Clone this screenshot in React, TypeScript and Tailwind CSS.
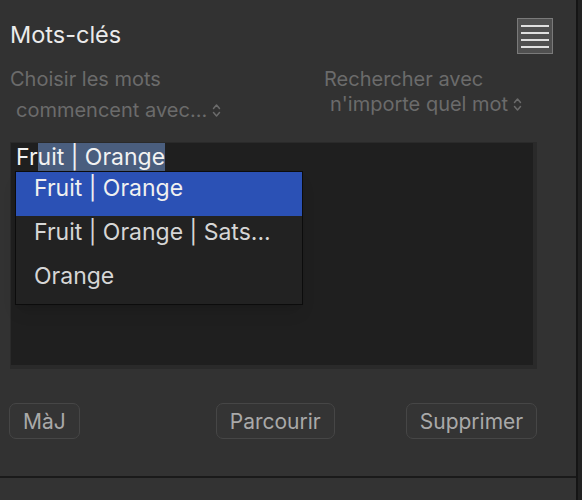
import React from "react";

const FONT = { fontFamily: "Inter, 'Noto Sans', 'Liberation Sans', sans-serif" };

function UpDown() {
  return (
    <svg width="9" height="15" viewBox="0 0 9 15" className="inline-block ml-[5px]">
      <path d="M1.5 5.5 L4.5 2 L7.5 5.5 M1.5 9.5 L4.5 13 L7.5 9.5" fill="none" stroke="#6b6b6b" strokeWidth="1.5" strokeLinecap="round" strokeLinejoin="round" />
    </svg>
  );
}

function Hamburger() {
  return (
    <button className="w-[36px] h-[36px] bg-[#505050] border border-[#7a7a7a] flex flex-col justify-center gap-[5px] px-[3px]">
      {[0, 1, 2, 3].map((i) => (
        <span key={i} className="block h-[2px] w-full bg-[#e0e0e0]" />
      ))}
    </button>
  );
}

function Btn({ label, className }: { label: string; className?: string }) {
  return (
    <button className={`h-[36px] px-[13px] rounded-[7px] border border-[#464646] bg-[#343434] text-[#a9a9a9] text-[21px] leading-none ${className ?? ""}`}>
      {label}
    </button>
  );
}

export default function App() {
  const items = ["Fruit | Orange", "Fruit | Orange | Sats...", "Orange"];
  return (
    <div className="w-[582px] h-[500px] flex bg-[#323232] overflow-hidden" style={FONT}>
      <div className="w-[576px] flex flex-col">
        <div className="h-[476px] relative">
          <div className="flex justify-between items-start pt-[18px] pr-[23px]">
            <h1 className="pl-[10px] pt-[2px] text-[23.5px] leading-[30px] text-[#ebebeb] font-normal">Mots-clés</h1>
            <Hamburger />
          </div>
          <div className="flex mt-[13px] text-[20px] text-[#6b6b6b]">
            <div className="w-[324px] pl-[10px]">
              <div className="leading-[24px]">Choisir les mots</div>
              <div className="leading-[24px] pl-[6px] mt-[7px] flex items-center">commencent avec...<UpDown /></div>
            </div>
            <div>
              <div className="leading-[24px]">Rechercher avec</div>
              <div className="leading-[24px] pl-[6px] mt-[1px] flex items-center">n'importe quel mot<UpDown /></div>
            </div>
          </div>
          <div className="ml-[10px] mt-[20px] w-[527px] h-[227px] bg-[#1f1f1f] border-t border-l border-r-4 border-b-4 border-[#2a2a2a] relative">
            <div className="pl-[5px] text-[23px] leading-[28px] text-[#f2f2f2]">
              Fr<span className="bg-[#4a5e7e]">uit | Orange</span>
            </div>
            <div className="absolute left-[4px] top-[28px] w-[288px] bg-[#222222] border border-[#0c0c0c] shadow-lg">
              {items.map((t, i) => (
                <div
                  key={t}
                  className={`h-[44px] pl-[18px] pb-[11px] flex items-center text-[23px] ${i === 0 ? "bg-[#2b51b5] text-[#f0f0f0]" : "text-[#d6d6d6]"}`}
                >
                  {t}
                </div>
              ))}
            </div>
          </div>
          <div className="flex mt-[34px]">
            <Btn label="MàJ" className="ml-[9px] px-[13px]" />
            <Btn label="Parcourir" className="ml-[136px]" />
            <Btn label="Supprimer" className="ml-[71px]" />
          </div>
        </div>
        <div className="h-[2px] bg-[#1a1a1a]" />
        <div className="flex-1 bg-[#333333]" />
      </div>
      <div className="w-[2px] bg-[#151515]" />
      <div className="flex-1 bg-[#222222]" />
    </div>
  );
}
